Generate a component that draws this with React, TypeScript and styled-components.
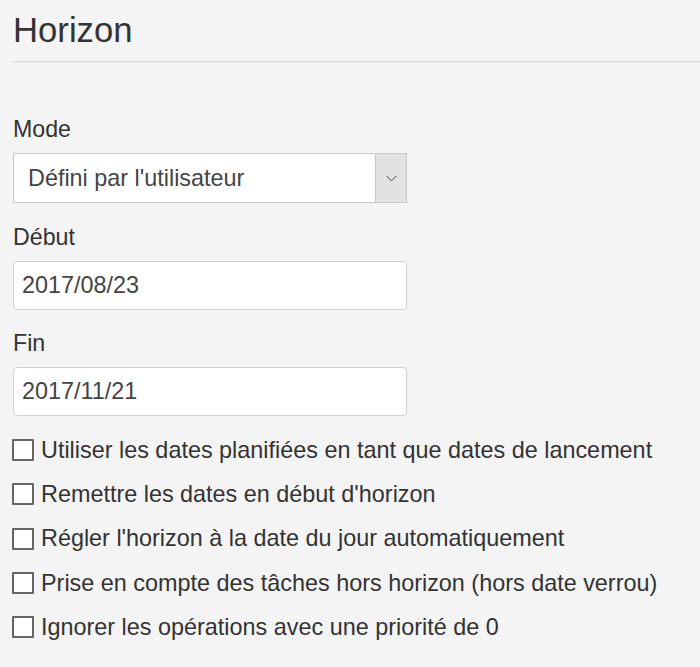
import React from "react";
import styled, { createGlobalStyle } from "styled-components";

const font = `"Liberation Sans", Arial, Helvetica, sans-serif`;

const Global = createGlobalStyle`
  html, body { margin: 0; padding: 0; background: #f4f4f4; }
  body { font-family: ${font}; color: #333; }
  * { box-sizing: border-box; }
`;

const Page = styled.div`
  padding: 10px 0 0 13px;
  width: 700px;
  font-family: ${font};
`;

const Title = styled.h1`
  margin: 0;
  font-family: ${font};
  font-size: 34.7px;
  line-height: 40px;
  font-weight: 400;
  color: #333;
`;

const Rule = styled.div`
  margin-top: 11px;
  height: 1px;
  background: #dcdcdc;
  box-shadow: 0 1px 0 #ececec;
`;

const Field = styled.div<{ $top: number }>`
  margin-top: ${(p) => p.$top}px;
  display: flex;
  flex-direction: column;
  gap: 11px;
`;

const Label = styled.label`
  font-family: ${font};
  font-size: 23.2px;
  line-height: 26px;
  color: #333;
`;

const SelectBox = styled.div`
  width: 394px;
  height: 50px;
  border: 1px solid #c8c8c8;
  background: #fff;
  display: flex;
  align-items: stretch;
`;

const SelectText = styled.div`
  flex: 1;
  padding-left: 14px;
  display: flex;
  align-items: center;
  font-family: ${font};
  font-size: 23.4px;
  color: #444;
`;

const SelectButton = styled.div`
  width: 31px;
  background: #e2e2e2;
  border-left: 1px solid #c8c8c8;
  display: flex;
  align-items: center;
  justify-content: center;
`;

const TextInput = styled.div`
  width: 394px;
  height: 49px;
  border: 1px solid #cfcfcf;
  border-radius: 4px;
  background: #fff;
  padding-left: 8px;
  display: flex;
  align-items: center;
  font-family: ${font};
  font-size: 23.4px;
  color: #444;
`;

const Checks = styled.div`
  margin-top: 12px;
  display: flex;
  flex-direction: column;
`;

const CheckRow = styled.label`
  height: 44.3px;
  display: flex;
  align-items: center;
  gap: 7px;
  font-family: ${font};
  font-size: 23.4px;
  color: #333;
  margin-left: -1px;
`;

const Box = styled.span`
  width: 22px;
  height: 22px;
  border: 2px solid #666;
  border-radius: 1px;
  background: #fff;
  flex: none;
`;

const options = [
  "Utiliser les dates planifiées en tant que dates de lancement",
  "Remettre les dates en début d'horizon",
  "Régler l'horizon à la date du jour automatiquement",
  "Prise en compte des tâches hors horizon (hors date verrou)",
  "Ignorer les opérations avec une priorité de 0",
];

export default function App() {
  return (
    <>
      <Global />
      <Page>
        <Title>Horizon</Title>
        <Rule />
        <Field $top={54}>
          <Label>Mode</Label>
          <SelectBox>
            <SelectText>Défini par l'utilisateur</SelectText>
            <SelectButton>
              <svg width="11" height="7" viewBox="0 0 11 7">
                <path d="M0.5 0.8 L5.5 5.8 L10.5 0.8" fill="none" stroke="#777" strokeWidth="1.1" />
              </svg>
            </SelectButton>
          </SelectBox>
        </Field>
        <Field $top={21}>
          <Label>Début</Label>
          <TextInput>2017/08/23</TextInput>
        </Field>
        <Field $top={20}>
          <Label>Fin</Label>
          <TextInput>2017/11/21</TextInput>
        </Field>
        <Checks>
          {options.map((o) => (
            <CheckRow key={o}>
              <Box />
              {o}
            </CheckRow>
          ))}
        </Checks>
      </Page>
    </>
  );
}
